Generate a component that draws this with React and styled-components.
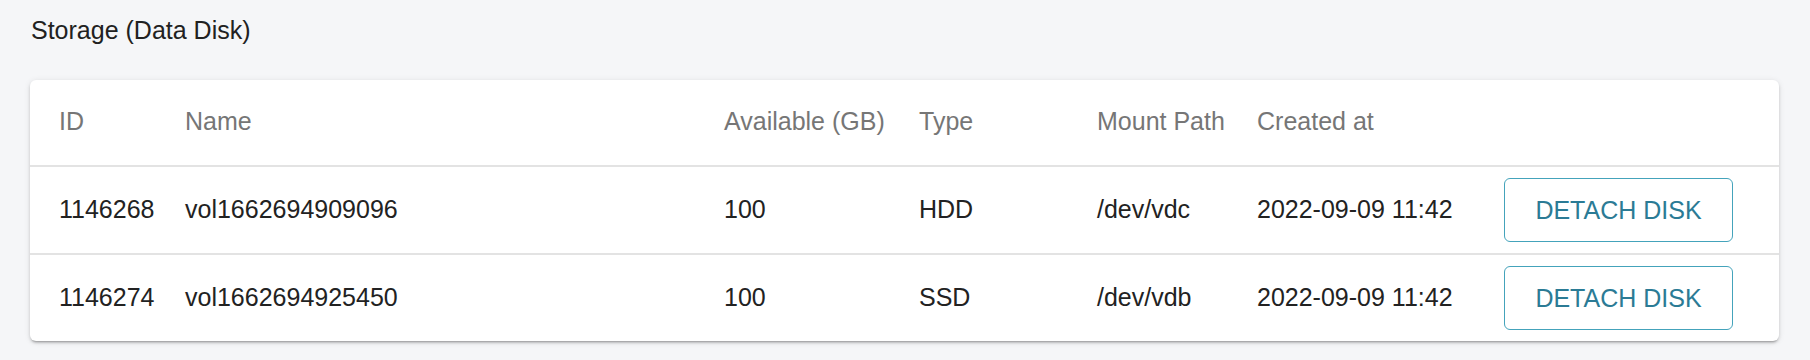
import React from "react";
import styled, { createGlobalStyle } from "styled-components";

const Global = createGlobalStyle`
  html, body { margin: 0; padding: 0; }
  body {
    background: #f5f6f8;
    font-family: "Liberation Sans", Arial, sans-serif;
    color: #212121;
  }
`;

const Page = styled.div`
  padding: 16px 31px 19px 30px;
`;

const Title = styled.h2`
  margin: 0 0 0 1px;
  font-size: 25px;
  line-height: 29px;
  font-weight: 400;
  color: #212121;
`;

const Card = styled.div`
  margin-top: 35px;
  background: #fff;
  border-radius: 6px;
  box-shadow: 0 3px 2px -2px rgba(0, 0, 0, 0.22), 0 2px 3px rgba(0, 0, 0, 0.14),
    0 1px 6px rgba(0, 0, 0, 0.1);
  overflow: hidden;
`;

const Row = styled.div`
  display: grid;
  grid-template-columns: 126px 539px 195px 178px 160px 247px 1fr;
  align-items: center;
  padding-left: 29px;
  height: ${(p) => (p.$head ? 85 : 86)}px;
  border-bottom: ${(p) => (p.$last ? "none" : "2px solid #e3e3e3")};
  font-size: 25px;
  line-height: 29px;
  color: ${(p) => (p.$head ? "#767676" : "#222222")};
`;

const Cell = styled.div`
  white-space: nowrap;
  padding-bottom: 2px;
`;

const ActionCell = styled.div`
  display: flex;
  align-items: center;
`;

const DetachButton = styled.button`
  width: 229px;
  height: 64px;
  background: #fff;
  border: 1.5px solid #44a3bb;
  border-radius: 6px;
  color: #2b7b95;
  font-family: "Liberation Sans", Arial, sans-serif;
  font-size: 25px;
  text-transform: uppercase;
  cursor: pointer;
  padding: 0;
`;

const headers = ["ID", "Name", "Available (GB)", "Type", "Mount Path", "Created at", ""];

const disks = [
  { id: "1146268", name: "vol1662694909096", size: "100", type: "HDD", path: "/dev/vdc", created: "2022-09-09 11:42" },
  { id: "1146274", name: "vol1662694925450", size: "100", type: "SSD", path: "/dev/vdb", created: "2022-09-09 11:42" },
];

export default function App() {
  return (
    <>
      <Global />
      <Page>
        <Title>Storage (Data Disk)</Title>
        <Card>
          <Row $head>
            {headers.map((h, i) => (
              <Cell key={i}>{h}</Cell>
            ))}
          </Row>
          {disks.map((d, i) => (
            <Row key={d.id} $last={i === disks.length - 1}>
              <Cell>{d.id}</Cell>
              <Cell>{d.name}</Cell>
              <Cell>{d.size}</Cell>
              <Cell>{d.type}</Cell>
              <Cell>{d.path}</Cell>
              <Cell>{d.created}</Cell>
              <ActionCell>
                <DetachButton>Detach Disk</DetachButton>
              </ActionCell>
            </Row>
          ))}
        </Card>
      </Page>
    </>
  );
}
